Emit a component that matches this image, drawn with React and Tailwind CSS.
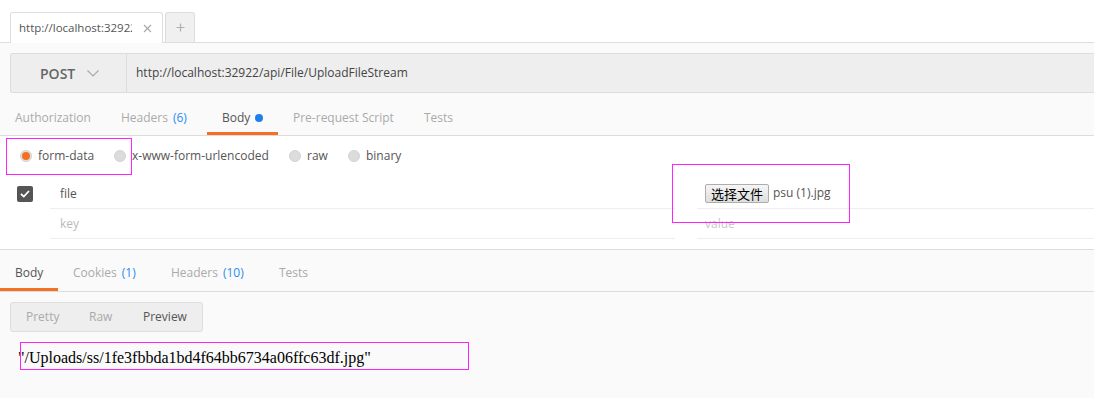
import React from "react";

const font = { fontFamily: '"Open Sans", "Noto Sans CJK SC", sans-serif' };

function Radio({ checked }) {
  return checked ? (
    <span className="block shrink-0 w-[12px] h-[12px] rounded-full bg-[#e3e3e3] border border-[#d0d0d0] flex items-center justify-center">
      <span className="block w-[8px] h-[8px] rounded-full bg-[#f47023]" />
    </span>
  ) : (
    <span className="block shrink-0 w-[12px] h-[12px] rounded-full bg-[#dcdcdc] border border-[#d3d3d3]" />
  );
}

export default function App() {
  return (
    <div
      className="relative w-[1094px] h-[398px] overflow-hidden bg-white text-[12px]"
      style={font}
    >
      {/* top tab strip */}
      <div className="h-[43px] flex items-end pl-[10px] gap-[2px] border-b border-[#dddddd] bg-white">
        <div className="relative -mb-px w-[153px] h-[31px] bg-white border border-b-0 border-[#dddddd] rounded-t-[3px] flex items-center pl-[8px]">
          <span className="w-[113px] overflow-hidden whitespace-nowrap text-[11.5px] text-[#555]">
            http://localhost:32922
          </span>
          <svg className="ml-[11px]" width="9" height="9" viewBox="0 0 9 9">
            <path d="M1 1 L8 8 M8 1 L1 8" stroke="#aaa" strokeWidth="1.2" />
          </svg>
        </div>
        <div className="w-[30px] h-[30px] bg-[#f0f0f0] border border-b-0 border-[#dddddd] rounded-t-[3px] flex items-center justify-center">
          <svg width="9" height="9" viewBox="0 0 9 9">
            <path d="M4.5 0.5 V8.5 M0.5 4.5 H8.5" stroke="#b0b0b0" strokeWidth="1.2" />
          </svg>
        </div>
      </div>

      {/* request area */}
      <div className="bg-[#fafafa] pt-[10px]">
        <div className="ml-[10px] h-[40px] bg-[#eeeeee] border border-r-0 border-[#dddddd] rounded-l-[3px] flex items-stretch">
          <div className="w-[116px] border-r border-[#dddddd] flex items-center pl-[29px] gap-[12px]">
            <span className="text-[14px] font-semibold text-[#666]">POST</span>
            <svg width="12" height="7" viewBox="0 0 12 7">
              <path d="M0.5 0.5 L6 6 L11.5 0.5" fill="none" stroke="#aaa" strokeWidth="1.2" />
            </svg>
          </div>
          <div className="flex items-center pl-[9px] text-[12px] text-[#444]">
            http://localhost:32922/api/File/UploadFileStream
          </div>
        </div>

        {/* request tabs */}
        <div className="h-[43px] pt-[12px] flex items-stretch border-b border-[#dddddd]">
          <div className="w-[106px] pl-[15px] pb-[5px] flex items-center text-[#aaa]">Authorization</div>
          <div className="w-[101px] pl-[15px] pb-[5px] flex items-center text-[#aaa]">
            Headers<span className="ml-[5px] text-[#2a8df0]">(6)</span>
          </div>
          <div className="w-[71px] pl-[15px] pb-[2px] flex items-center text-[#555] border-b-[3px] border-[#f47023]">
            Body
            <span className="ml-[5px] w-[8px] h-[8px] rounded-full bg-[#1e7ff0]" />
          </div>
          <div className="w-[131px] pl-[15px] pb-[5px] flex items-center text-[#aaa]">Pre-request Script</div>
          <div className="pl-[15px] pb-[5px] flex items-center text-[#aaa]">Tests</div>
        </div>
      </div>

      {/* body editor */}
      <div className="bg-white h-[113px]">
        <div className="h-[43px] pb-[4px] flex items-center pl-[20px] text-[#555]">
          <Radio checked />
          <span className="ml-[6px] w-[76px]">form-data</span>
          <Radio />
          <span className="ml-[6px] w-[157px]">x-www-form-urlencoded</span>
          <Radio />
          <span className="ml-[6px] w-[41px]">raw</span>
          <Radio />
          <span className="ml-[6px]">binary</span>
        </div>
        <div className="flex h-[30px]">
          <div className="w-[50px] flex items-center pl-[17px]">
            <span className="w-[16px] h-[16px] rounded-[2px] bg-[#555] flex items-center justify-center">
              <svg width="10" height="8" viewBox="0 0 10 8">
                <path d="M1 4 L3.8 6.6 L9 1" fill="none" stroke="#fff" strokeWidth="1.8" />
              </svg>
            </span>
          </div>
          <div className="w-[625px] border-b border-[#eeeeee] flex items-center pl-[10px] text-[#555]">file</div>
          <div className="w-[22px]" />
          <div className="flex-1 border-b border-[#eeeeee] flex items-center pl-[8px] pb-[1px]">
            <button className="h-[19px] w-[64px] border border-[#adadad] rounded-[2px] bg-gradient-to-b from-[#f6f6f6] to-[#dedede] text-[13px] text-black leading-none" style={{ fontFamily: '"Noto Sans CJK SC", sans-serif' }}>
              选择文件
            </button>
            <span className="ml-[4px] text-[#555]">psu (1).jpg</span>
          </div>
        </div>
        <div className="flex h-[30px]">
          <div className="w-[50px]" />
          <div className="w-[625px] border-b border-[#eeeeee] flex items-center pl-[10px] text-[#bbb]">key</div>
          <div className="w-[22px]" />
          <div className="flex-1 border-b border-[#eeeeee] flex items-center pl-[8px] text-[#c8c8c8]">value</div>
        </div>
      </div>

      {/* response */}
      <div className="bg-[#fafafa] border-t border-[#dddddd] h-[200px]">
        <div className="h-[42px] flex items-stretch border-b border-[#dddddd]">
          <div className="w-[58px] pl-[15px] pt-[7px] flex items-center text-[#555] border-b-[3px] border-[#f47023]">Body</div>
          <div className="w-[98px] pl-[15px] pt-[4px] flex items-center text-[#aaa]">
            Cookies<span className="ml-[5px] text-[#2a8df0]">(1)</span>
          </div>
          <div className="w-[108px] pl-[15px] pt-[4px] flex items-center text-[#aaa]">
            Headers<span className="ml-[5px] text-[#2a8df0]">(10)</span>
          </div>
          <div className="pl-[15px] pt-[4px] flex items-center text-[#aaa]">Tests</div>
        </div>
        <div className="pt-[10px] pl-[10px]">
          <div className="w-[193px] h-[30px] bg-[#eeeeee] border border-[#dddddd] rounded-[3px] flex items-center">
            <span className="ml-[15px] w-[63px] text-[#aaa]">Pretty</span>
            <span className="w-[54px] text-[#aaa]">Raw</span>
            <span className="text-[#555]">Preview</span>
          </div>
        </div>
        <div className="pl-[18px] pt-[16px] text-[16px] text-black leading-[20px]" style={{ fontFamily: '"Liberation Serif", serif' }}>
          "/Uploads/ss/1fe3fbbda1bd4f64bb6734a06ffc63df.jpg"
        </div>
      </div>

      {/* annotation boxes */}
      <div className="absolute left-[6px] top-[138px] w-[126px] h-[37px] border border-[#ff22ff] pointer-events-none" />
      <div className="absolute left-[672px] top-[164px] w-[178px] h-[59px] border border-[#ff22ff] pointer-events-none" />
      <div className="absolute left-[20px] top-[342px] w-[449px] h-[28px] border border-[#ff22ff] pointer-events-none" />
    </div>
  );
}
